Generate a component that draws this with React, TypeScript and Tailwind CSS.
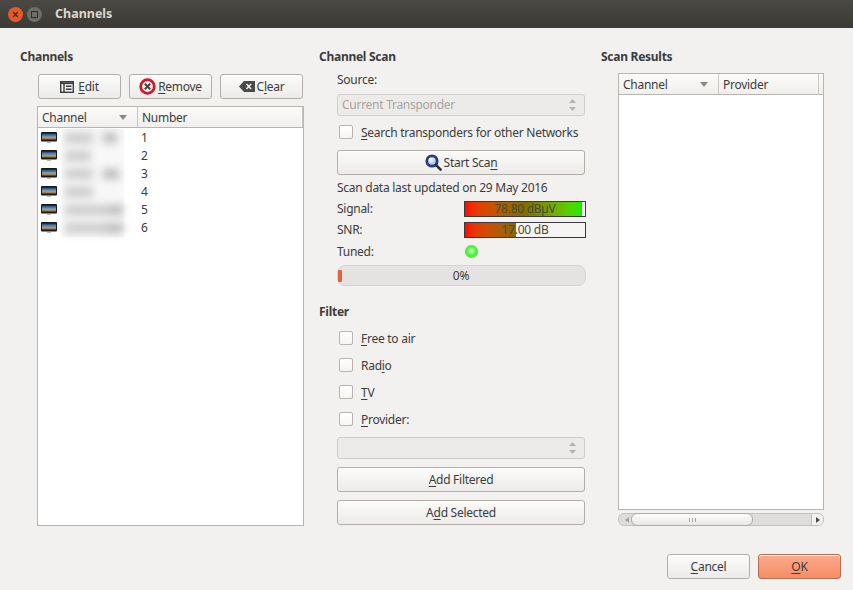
import type { ReactNode } from "react";

const font = { sans: "font-['Noto_Sans',sans-serif]" };

// one underlined mnemonic letter inside a label
const Mn = ({ children }: { children: ReactNode }) => (
    <span className="underline decoration-1 underline-offset-2">{children}</span>
);

const Button = ({ children, className = "" }: { children: ReactNode; className?: string }) => (
    <button className={`flex h-[25px] items-center justify-center gap-1.5 rounded-[3px] border border-[#b3aeaa] bg-gradient-to-b from-[#fbfbfa] to-[#ecebe9] text-[#3c3c3c] shadow-[inset_0_1px_0_#ffffff] ${className}`}>
        {children}
    </button>
);

const Check = ({ children }: { children: ReactNode }) => (
    <label className="flex items-center gap-[8px] whitespace-nowrap">
        <span className="size-[14px] rounded-[2px] border border-[#b8b4b0] bg-gradient-to-b from-[#ffffff] to-[#f5f4f3]" />
        <span className="pt-px">{children}</span>
    </label>
);

const Spin = () => (
    <svg width="7" height="14" viewBox="0 0 7 14" className="fill-[#b5b2ae]">
        <path d="M3.5 1 7 5H0z" />
        <path d="M0 9h7l-3.5 4z" />
    </svg>
);

const Combo = ({ children }: { children?: ReactNode }) => (
    <div className="mr-px flex h-[22px] items-center justify-between rounded-[3px] border border-[#d0cdca] bg-[#ecebe9] pl-[4px] pr-[8px] text-[#a8a5a2]">
        <span>{children}</span>
        <Spin />
    </div>
);

const TvIcon = () => (
    <svg width="16" height="12" viewBox="0 0 16 12" className="shrink-0">
        <defs>
            <linearGradient id="tvscreen" x1="0" y1="0" x2="0" y2="1">
                <stop offset="0" stopColor="#1e3f6b" />
                <stop offset="0.55" stopColor="#7fa3c4" />
                <stop offset="0.75" stopColor="#b08a4a" />
                <stop offset="1" stopColor="#3a2a18" />
            </linearGradient>
        </defs>
        <rect x="0" y="0" width="16" height="9.5" rx="1" fill="#15181c" />
        <rect x="1" y="1.5" width="14" height="6.5" fill="url(#tvscreen)" />
        <path d="M6 10h4v1H6z" fill="#b5b5b5" />
    </svg>
);

const EditIcon = () => (
    <svg width="14" height="12" viewBox="0 0 14 12" fill="none" stroke="#3c3c3c" strokeWidth="1.4">
        <rect x="0.7" y="0.7" width="12.6" height="10.6" />
        <path d="M0.7 2.2h12.6" strokeWidth="1.8" />
        <path d="M4 3v8" />
        <path d="M6 5.2h5.5M6 8.2h5.5" />
    </svg>
);

const RemoveIcon = () => (
    <svg width="17" height="17" viewBox="0 0 17 17">
        <circle cx="8.5" cy="8.5" r="6.8" fill="#f3eeee" stroke="#d3182b" strokeWidth="2.8" />
        <path d="m5.8 5.8 5.4 5.4m0-5.4-5.4 5.4" stroke="#444" strokeWidth="2" />
    </svg>
);

const ClearIcon = () => (
    <svg width="16" height="11" viewBox="0 0 16 11">
        <path d="M5 0h11v11H5L0 5.5z" fill="#4a4a4a" />
        <path d="m7.5 3 4.6 5m0-5-4.6 5" stroke="#f2f1f0" strokeWidth="1.5" />
    </svg>
);

const SearchIcon = () => (
    <svg width="17" height="17" viewBox="0 0 17 17">
        <defs>
            <radialGradient id="lens" cx="0.35" cy="0.3" r="0.8">
                <stop offset="0" stopColor="#ffffff" />
                <stop offset="1" stopColor="#8fa8d0" />
            </radialGradient>
        </defs>
        <circle cx="7" cy="7" r="5.2" fill="url(#lens)" stroke="#24407e" strokeWidth="2.8" />
        <path d="m11 11 4.6 4.6" stroke="#2e2e2e" strokeWidth="2.6" strokeLinecap="round" />
    </svg>
);

const HeaderCell = ({ label, sort, className = "" }: { label: string; sort?: boolean; className?: string }) => (
    <div className={`flex h-full items-center justify-between border-r border-[#c9c6c2] pl-[4px] pr-[10px] pt-px ${className}`}>
        <span>{label}</span>
        {sort && (
            <svg width="8" height="5" viewBox="0 0 8 5" className="fill-[#8a8784]">
                <path d="M0 0h8L4 5z" />
            </svg>
        )}
    </div>
);

const Header = ({ second }: { second: string }) => (
    <div className="flex h-[21px] shrink-0 items-center border-b border-[#b8b4b0] bg-gradient-to-b from-[#fbfbfa] to-[#f0efed]">
        <HeaderCell label="Channel" sort className="w-[100px]" />
        <HeaderCell label={second} className="flex-1" />
    </div>
);

// blurred-out channel names: [first block width, gap, second block width]
const channels = [
    [28, 10, 14],
    [26, 0, 0],
    [28, 10, 16],
    [28, 0, 0],
    [44, 0, 14],
    [42, 0, 16],
];

const ChannelRow = ({ index, blocks }: { index: number; blocks: number[] }) => (
    <div className="flex h-[18px] items-center">
        <div className="ml-[3px] flex w-[100px] shrink-0 items-center gap-[5px]">
            <TvIcon />
            <div className="flex h-[18px] w-[62px] items-center bg-[#f8f8f8] pl-[3px]">
                <div className="flex blur-[4px]" style={{ columnGap: blocks[1] }}>
                    <span className="h-[10px] bg-[#c9c9c9]" style={{ width: blocks[0] }} />
                    <span className="h-[10px] bg-[#b9b9b9]" style={{ width: blocks[2] }} />
                </div>
            </div>
        </div>
        <span>{index}</span>
    </div>
);

const Meter = ({ text, fill }: { text: string; fill: ReactNode }) => (
    <div className="relative h-[16px] w-[122px] border border-[#3a3a3a] bg-[#f5f4f3]">
        {fill}
        <span className="absolute inset-0 flex items-center justify-center text-[#4a4a3a]">{text}</span>
    </div>
);

export default function App() {
    return (
        <div className={`flex h-[590px] w-[853px] flex-col overflow-hidden bg-[#f2f1f0] text-[12px] tracking-[-0.27px] text-[#3c3c3c] ${font.sans}`}>
            <div className="flex h-[28px] shrink-0 items-center bg-gradient-to-b from-[#4b4943] to-[#3b3a35] pl-[8px]">
                <div className="flex size-[15px] items-center justify-center rounded-full bg-[#e9582c]">
                    <svg width="7" height="7" viewBox="0 0 7 7">
                        <path d="m1 1 5 5m0-5-5 5" stroke="#3c2a20" strokeWidth="1.2" />
                    </svg>
                </div>
                <div className="ml-[4px] flex size-[15px] items-center justify-center rounded-full bg-[#6f6d68]">
                    <div className="size-[7px] border border-[#2f2e2a]" />
                </div>
                <span className="ml-[13px] text-[12.5px] font-bold tracking-normal text-[#d9d6d0]">Channels</span>
            </div>

            <div className="flex flex-1 flex-col pb-[12px] pl-[20px] pr-[12px] pt-[19px]">
                <div className="flex h-[479px] items-stretch">
                    {/* channels */}
                    <section className="flex w-[284px] flex-col">
                        <h2 className="h-[27px] font-bold leading-[20px]">Channels</h2>
                        <div className="ml-[18px] flex gap-[8px]">
                            <Button className="w-[83px]"><EditIcon /><span className="-ml-[2px]"><Mn>E</Mn>dit</span></Button>
                            <Button className="w-[83px] gap-[2px]"><RemoveIcon /><span><Mn>R</Mn>emove</span></Button>
                            <Button className="w-[83px] gap-[2px]"><ClearIcon /><span>C<Mn>l</Mn>ear</span></Button>
                        </div>
                        <div className="ml-[17px] mr-0 mt-[7px] flex h-[420px] w-[267px] flex-col border border-[#b8b4b0] bg-white">
                            <Header second="Number" />
                            <div className="pt-px">
                                {channels.map((blocks, i) => (
                                    <ChannelRow key={i} index={i + 1} blocks={blocks} />
                                ))}
                            </div>
                        </div>
                    </section>

                    {/* channel scan and filter */}
                    <section className="ml-[15px] flex w-[267px] flex-col">
                        <h2 className="h-[20px] font-bold leading-[20px]">Channel Scan</h2>
                        <div className="flex flex-col pl-[18px]">
                            <div className="mt-[2px] flex h-[20px] items-center pt-px">Source:</div>
                            <div className="mt-[5px]"><Combo>Current Transponder</Combo></div>
                            <div className="ml-[2px] mt-[7px] flex h-[18px] items-center">
                                <Check><Mn>S</Mn>earch transponders for other Networks</Check>
                            </div>
                            <Button className="mr-px mt-[9px] gap-[2px]"><SearchIcon /><span>Start Sca<Mn>n</Mn></span></Button>
                            <div className="mt-[4px] flex h-[18px] items-center">Scan data last updated on 29 May 2016</div>
                            <div className="mt-[4px] flex h-[16px] items-center justify-between">
                                <span>Signal:</span>
                                <Meter text="78.80 dBµV" fill={<div className="absolute inset-y-0 left-0 w-[117px] bg-gradient-to-r from-[#ff0000] via-[#7f6a00] to-[#00ee00]" />} />
                            </div>
                            <div className="mt-[5px] flex h-[16px] items-center justify-between">
                                <span>SNR:</span>
                                <Meter text="17.00 dB" fill={<div className="absolute inset-y-0 left-0 w-[51px] bg-gradient-to-r from-[#ff0000] to-[#86660a]" />} />
                            </div>
                            <div className="mt-[4px] flex h-[18px] items-center">
                                <span className="w-[128px] pt-px">Tuned:</span>
                                <span className="size-[13px] rounded-full bg-[radial-gradient(circle_at_50%_45%,#c8ffb8_0%,#48f038_50%,#7ccf74_100%)] shadow-[0_0_1px_#8fdc88]" />
                            </div>
                            <div className="relative mt-[5px] flex h-[21px] items-center justify-center rounded-[8px] border border-[#d6d4d1] bg-[#e4e3e1] pr-px">
                                <span className="absolute left-0 top-[4px] h-[12px] w-[4px] rounded-[1px] bg-[#e1643a]" />
                                0%
                            </div>
                        </div>

                        <h2 className="mt-[16px] h-[19px] font-bold leading-[20px]">Filter</h2>
                        <div className="flex flex-col pl-[18px]">
                            <div className="ml-[2px] mt-[8px] flex flex-col gap-[9px]">
                                <div className="flex h-[18px] items-center"><Check><Mn>F</Mn>ree to air</Check></div>
                                <div className="flex h-[18px] items-center"><Check>Rad<Mn>i</Mn>o</Check></div>
                                <div className="flex h-[18px] items-center"><Check><Mn>T</Mn>V</Check></div>
                                <div className="flex h-[18px] items-center"><Check><Mn>P</Mn>rovider:</Check></div>
                            </div>
                            <div className="mt-[9px]"><Combo /></div>
                            <Button className="mr-px mt-[8px]"><span><Mn>A</Mn>dd Filtered</span></Button>
                            <Button className="mr-px mt-[8px]"><span>A<Mn>d</Mn>d Selected</span></Button>
                        </div>
                    </section>

                    {/* scan results */}
                    <section className="ml-[15px] flex w-[223px] flex-col">
                        <h2 className="h-[26px] font-bold leading-[20px]">Scan Results</h2>
                        <div className="ml-[17px] flex h-[437px] w-[206px] flex-col border border-[#b8b4b0] bg-white">
                            <div className="flex h-[21px] shrink-0 items-center border-b border-[#b8b4b0] bg-gradient-to-b from-[#fbfbfa] to-[#f0efed]">
                                <HeaderCell label="Channel" sort className="w-[100px]" />
                                <HeaderCell label="Provider" className="w-[100px]" />
                                <div className="flex-1" />
                            </div>
                        </div>
                        <div className="relative ml-[17px] mt-[3px] flex h-[13px] w-[206px] items-center rounded-[6px] border border-[#c4c1bd] bg-[#dedddb]">
                            <svg width="4" height="6" viewBox="0 0 4 6" className="absolute left-[6px] fill-[#a5a29e]">
                                <path d="M4 0v6L0 3z" />
                            </svg>
                            <div className="absolute left-[12px] flex h-[13px] w-[122px] items-center justify-center rounded-[6px] border border-[#aeaaa6] bg-gradient-to-b from-[#fdfdfc] to-[#e9e8e6]">
                                <div className="h-[4px] w-[7px] border-x border-[#a5a29e] bg-[linear-gradient(90deg,transparent_40%,#a5a29e_40%,#a5a29e_60%,transparent_60%)]" />
                            </div>
                            <div className="absolute right-0 flex h-[11px] w-[12px] items-center justify-center rounded-r-[6px] border-l border-[#c4c1bd] bg-[#f2f1f0]">
                                <svg width="4" height="6" viewBox="0 0 4 6" className="fill-[#4a4a4a]">
                                    <path d="M0 0v6l4-3z" />
                                </svg>
                            </div>
                        </div>
                    </section>
                </div>

                <div className="mt-[28px] flex justify-end gap-[8px]">
                    <Button className="w-[83px]"><span><Mn>C</Mn>ancel</span></Button>
                    <Button className="w-[83px] border-[#b86d50] from-[#fdab8b] to-[#f58c66]"><span><Mn>O</Mn>K</span></Button>
                </div>
            </div>
        </div>
    );
}
